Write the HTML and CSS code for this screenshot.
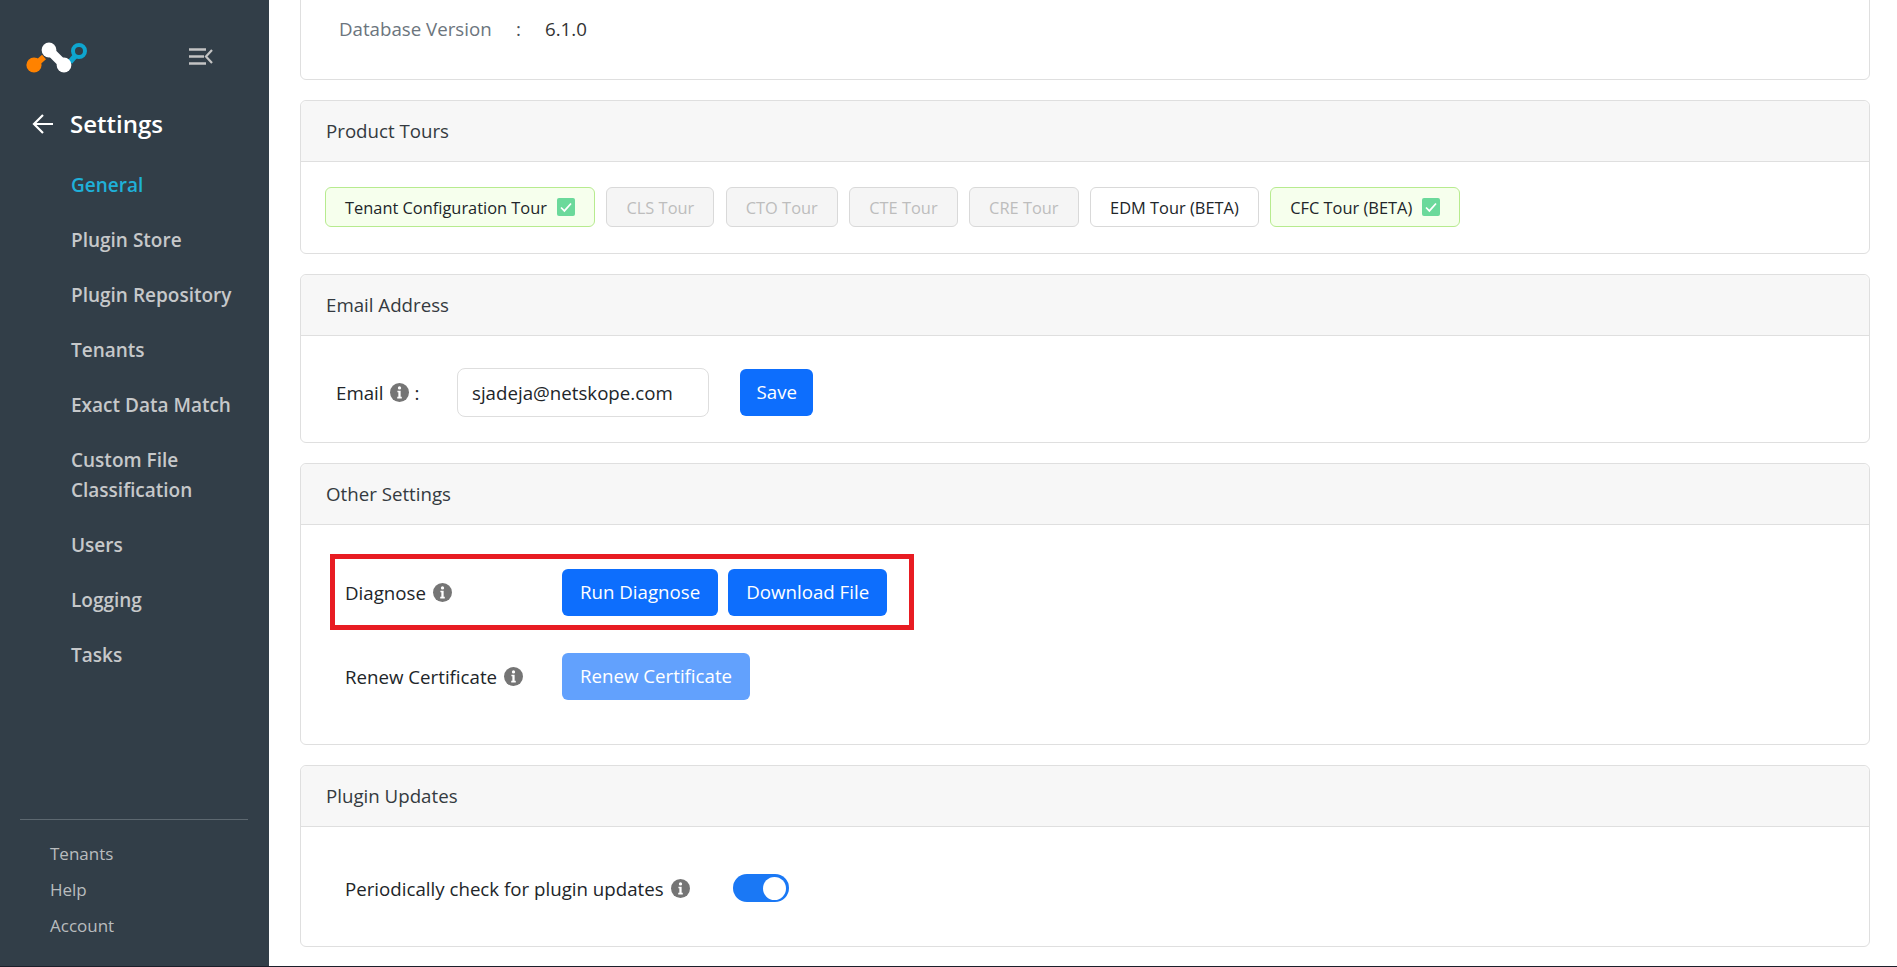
FILE: index.html
```html
<!DOCTYPE html>
<html lang="en">
<head>
<meta charset="utf-8">
<title>Settings</title>
<link rel="stylesheet" href="styles.css">
</head>
<body>
<svg class="defs" width="0" height="0" aria-hidden="true">
  <symbol id="info" viewBox="0 0 20 20">
    <circle cx="10" cy="10" r="10" fill="#757575"/>
    <circle cx="10" cy="5.2" r="1.7" fill="#fff"/>
    <path d="M7.8 8.2h3.4v6.4h1.2v1.6H7.6v-1.6h1.2V9.8h-1z" fill="#fff"/>
  </symbol>
  <symbol id="check" viewBox="0 0 18 18">
    <rect width="18" height="18" rx="2" fill="#6bd99b"/>
    <path d="M4 9.5l3.4 3.4L14 5.5" fill="none" stroke="#fff" stroke-width="1.7"/>
  </symbol>
</svg>
<div class="app">
  <aside class="sidebar">
    <div class="brand">
      <svg class="logo" width="64" height="34" viewBox="0 -2 64 34">
        <path d="M9 23L18 15" stroke="#ff8200" stroke-width="6"/>
        <circle cx="8" cy="23" r="7.6" fill="#ff8200"/>
        <path d="M44 20L50 13" stroke="#0ea5cf" stroke-width="5.5"/>
        <circle cx="53" cy="9" r="6" fill="none" stroke="#0ea5cf" stroke-width="4"/>
        <circle cx="23" cy="8" r="7.4" fill="#fff"/>
        <circle cx="38" cy="23" r="7.4" fill="#fff"/>
        <path d="M23 8L38 23" stroke="#fff" stroke-width="9"/>
      </svg>
      <svg class="collapse" width="24" height="18" viewBox="0 0 24 18">
        <path d="M0 1.5h17M0 8.5h15M0 15.5h17" stroke="#c4c4c4" stroke-width="2.4"/>
        <path d="M23 2L17 8.5L23 15" fill="none" stroke="#c4c4c4" stroke-width="2.2"/>
      </svg>
    </div>
    <div class="section-title">
      <svg width="22" height="20" viewBox="0 0 22 20"><path d="M21 10H2M11 1L2 10l9 9" fill="none" stroke="#fff" stroke-width="2.2"/></svg>
      <span>Settings</span>
    </div>
    <nav class="nav">
      <a class="nav-item active">General</a>
      <a class="nav-item">Plugin Store</a>
      <a class="nav-item">Plugin Repository</a>
      <a class="nav-item">Tenants</a>
      <a class="nav-item">Exact Data Match</a>
      <a class="nav-item">Custom File Classification</a>
      <a class="nav-item">Users</a>
      <a class="nav-item">Logging</a>
      <a class="nav-item">Tasks</a>
    </nav>
    <div class="foot">
      <a class="foot-item">Tenants</a>
      <a class="foot-item">Help</a>
      <a class="foot-item">Account</a>
    </div>
  </aside>
  <main class="main">
    <section class="card card-cut">
      <div class="db-row"><span class="db-label">Database Version</span><span class="db-colon">:</span><span class="db-value">6.1.0</span></div>
    </section>
    <section class="card">
      <header class="card-head">Product Tours</header>
      <div class="card-body tours">
        <button class="tour done">Tenant Configuration Tour <svg class="chk"><use href="#check"/></svg></button>
        <button class="tour off">CLS Tour</button>
        <button class="tour off">CTO Tour</button>
        <button class="tour off">CTE Tour</button>
        <button class="tour off">CRE Tour</button>
        <button class="tour">EDM Tour (BETA)</button>
        <button class="tour done">CFC Tour (BETA) <svg class="chk"><use href="#check"/></svg></button>
      </div>
    </section>
    <section class="card">
      <header class="card-head">Email Address</header>
      <div class="card-body email-row">
        <span class="email-label">Email <svg class="info"><use href="#info"/></svg> :</span>
        <span class="input">sjadeja@netskope.com</span>
        <button class="btn save">Save</button>
      </div>
    </section>
    <section class="card">
      <header class="card-head">Other Settings</header>
      <div class="card-body other">
        <div class="setting highlighted">
          <span class="setting-label">Diagnose <svg class="info"><use href="#info"/></svg></span>
          <button class="btn">Run Diagnose</button>
          <button class="btn">Download File</button>
        </div>
        <div class="setting">
          <span class="setting-label">Renew Certificate <svg class="info"><use href="#info"/></svg></span>
          <button class="btn faded">Renew Certificate</button>
        </div>
      </div>
    </section>
    <section class="card">
      <header class="card-head">Plugin Updates</header>
      <div class="card-body updates">
        <span class="setting-text">Periodically check for plugin updates <svg class="info"><use href="#info"/></svg></span>
        <span class="toggle"><span class="knob"></span></span>
      </div>
    </section>
  </main>
</div>
</body>
</html>
```
FILE: styles.css
```css
* { box-sizing: border-box; }
html, body { margin: 0; height: 100%; background: #fff; }
body { font-family: "Open Sans", "Noto Sans", sans-serif; font-size: 18.7px; color: #212529; overflow: hidden; }
.defs { display: block; height: 0; }
.app { display: flex; height: 967px; border-bottom: 1px solid #1c1f2a; overflow: hidden; }

.sidebar { width: 269px; flex: none; background: #323e48; display: flex; flex-direction: column; }
.brand { display: flex; align-items: center; height: 34px; margin: 40px 0 0 26px; }
.collapse { margin-left: 99px; }
.section-title { display: flex; align-items: center; gap: 16px; margin: 33px 0 0 32px; color: #fff; font-size: 24px; font-weight: 600; line-height: 34px; }
.nav { display: flex; flex-direction: column; margin: 29px 0 0 71px; }
.nav-item { color: #c6c8ca; font-size: 19px; font-weight: 600; line-height: 30px; margin-bottom: 25px; width: 170px; }
.nav-item.active { color: #1fb0d8; }
.foot { margin: auto 21px 28px 20px; border-top: 1px solid #5d6870; padding: 22px 0 0 30px; display: flex; flex-direction: column; gap: 12px; }
.foot-item { color: #b9bcbe; font-size: 17px; line-height: 24px; }

.main { flex: 1; min-width: 0; padding: 0 27px 0 31px; display: flex; flex-direction: column; gap: 20px; }
.card { border: 1px solid #dfdfdf; border-radius: 6px; flex: none; }
.card-cut { margin-top: -12px; height: 92px; padding: 28px 0 0 38px; }
.db-row { display: flex; line-height: 24px; }
.db-label { color: #6c757d; width: 177px; }
.db-colon { color: #495057; width: 29px; }
.db-value { color: #333; }
.card-head { height: 61px; padding-left: 25px; line-height: 60px; background: #f7f7f7; border-bottom: 1px solid #dfdfdf; border-radius: 6px 6px 0 0; color: #343a40; }

.tours { display: flex; gap: 11.5px; padding: 25px 24px 0; height: 91px; }
.tour { height: 40px; padding: 0 19px; border: 1px solid #d9d9d9; border-radius: 6px; background: #fff; color: #212529; font: inherit; font-size: 16.4px; display: flex; align-items: center; gap: 10px; white-space: nowrap; }
.tour.done { background: #f6ffed; border-color: #b7eb8f; }
.tour.off { background: #f5f5f5; color: #bdbdbd; }
.chk { width: 18px; height: 18px; }

.email-row { display: flex; align-items: center; height: 106px; padding: 6px 0 0 35px; }
.email-label { width: 121px; display: flex; align-items: center; gap: 6px; }
.input { width: 252px; height: 49px; border: 1px solid #dedede; border-radius: 8px; padding: 0 14px; display: flex; align-items: center; }
.btn { height: 47px; padding: 0 18px 2px; border: 0; border-radius: 6px; background: #0d6efd; color: #fff; font: inherit; font-weight: 500; white-space: nowrap; }
.btn.save { margin-left: 31px; padding: 0 16.5px 2px; }
.btn.faded { background: #62a1fd; }
.info { width: 19px; height: 19px; flex: none; vertical-align: -1px; }

.other { height: 219px; padding: 29px 0 0 29px; display: flex; flex-direction: column; gap: 24px; }
.setting { display: flex; align-items: center; gap: 10px; height: 47px; padding-left: 15px; }
.setting-label { width: 207px; flex: none; display: flex; align-items: center; gap: 7px; }
.highlighted { width: 584px; height: 76px; border: 5px solid #e81c22; padding-left: 10px; margin-bottom: -1px; }

.updates { display: flex; align-items: center; height: 119px; padding: 3px 0 0 44px; gap: 43px; }
.setting-text { display: flex; align-items: center; gap: 7px; }
.toggle { width: 56px; height: 28px; border-radius: 14px; background: #1a78f5; display: flex; align-items: center; justify-content: flex-end; padding-right: 3px; }
.knob { width: 23px; height: 23px; border-radius: 50%; background: #fff; }
```
